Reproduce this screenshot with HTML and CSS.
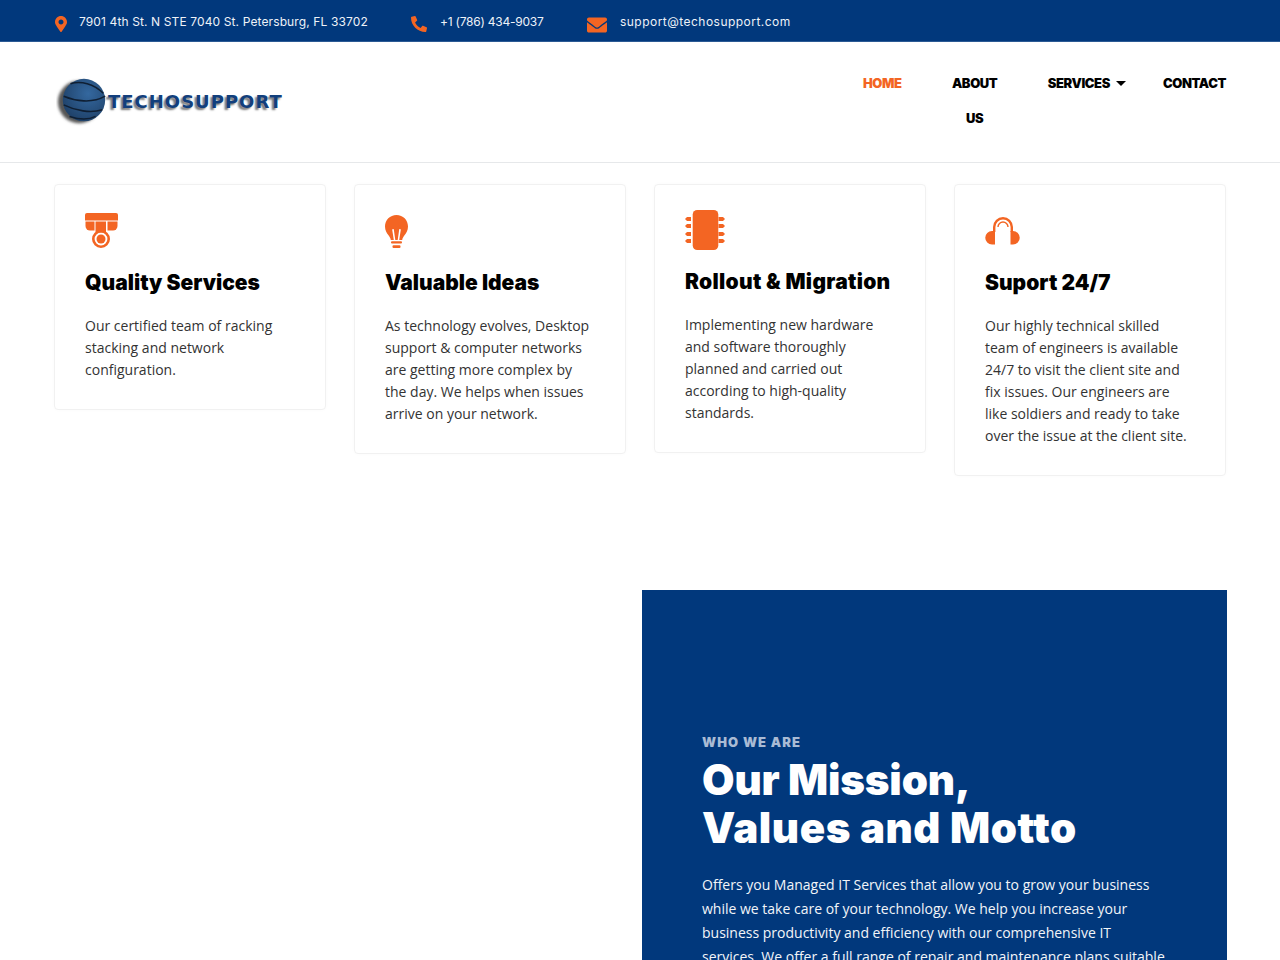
FILE: index.html
```html
<!DOCTYPE html>
<html lang="en">
<head>
<meta charset="utf-8">
<title>Techosupport</title>
<link rel="stylesheet" href="styles.css">
</head>
<body>
<div class="topbar">
  <div class="topbar-item item-address">
    <svg class="icon-pin" viewBox="0 0 384 512"><path d="M172.268 501.67C26.97 291.031 0 256.405 0 192 0 85.961 85.961 0 192 0s192 85.961 192 192c0 64.405-26.97 99.031-172.268 309.67-9.535 13.774-29.93 13.773-39.464 0zM192 272c44.183 0 80-35.817 80-80s-35.817-80-80-80-80 35.817-80 80 35.817 80 80 80z"/></svg>
    <span>7901 4th St. N STE 7040 St. Petersburg, FL 33702</span>
  </div>
  <div class="topbar-item item-phone">
    <svg class="icon-phone" viewBox="0 0 512 512"><path transform="matrix(-1 0 0 1 512 0)" d="M493.4 24.6l-104-24c-11.3-2.6-22.9 3.3-27.5 13.9l-48 112c-4.2 9.8-1.4 21.3 6.9 28l60.6 49.6c-36 76.7-98.9 140.5-177.2 177.2l-49.6-60.6c-6.8-8.3-18.2-11.1-28-6.9l-112 48C3.9 366.5-2 378.1.6 389.4l24 104C27.1 504.2 36.7 512 48 512c256.1 0 464-207.5 464-464 0-11.2-7.7-20.9-18.6-23.4z"/></svg>
    <span>+1 (786) 434-9037</span>
  </div>
  <div class="topbar-item item-mail">
    <svg class="icon-mail" viewBox="0 64 512 384"><path d="M502.3 190.8c3.9-3.1 9.7-.2 9.7 4.7V400c0 26.5-21.5 48-48 48H48c-26.5 0-48-21.5-48-48V195.6c0-5 5.7-7.8 9.7-4.7 22.4 17.4 52.1 39.5 154.1 113.6 21.1 15.4 56.7 47.8 92.2 47.6 35.7.3 72-32.8 92.3-47.6 102-74.1 131.6-96.3 154-113.7zM256 320c23.2.4 56.6-29.2 73.4-41.4 132.7-96.3 142.8-104.7 173.4-128.7 5.8-4.5 9.2-11.5 9.2-18.9v-19c0-26.5-21.5-48-48-48H48C21.5 64 0 85.5 0 112v19c0 7.4 3.4 14.3 9.2 18.9 30.6 23.9 40.7 32.4 173.4 128.7 16.8 12.2 50.2 41.8 73.4 41.4z"/></svg>
    <span>support@techosupport.com</span>
  </div>
</div>

<header class="site-header">
  <a class="logo" href="#">
    <svg class="logo-globe" viewBox="0 0 56 56">
      <defs>
        <radialGradient id="globe" cx="0.6" cy="0.35" r="0.8">
          <stop offset="0" stop-color="#34689f"/>
          <stop offset="1" stop-color="#1b3a5f"/>
        </radialGradient>
        <filter id="soft" x="-20%" y="-20%" width="140%" height="140%"><feGaussianBlur stdDeviation="1.8"/></filter>
      </defs>
      <circle cx="24" cy="29" r="22" fill="#555" filter="url(#soft)"/>
      <circle cx="29" cy="27" r="22" fill="url(#globe)"/>
      <path d="M15 10c11-3 24 0 34 10M8 23c12 5 29 8 43 0M8 32c12 6 28 9 40 5M14 44c9 3 19 4 27 0" fill="none" stroke="#0f1f33" stroke-width="1.6"/>
    </svg>
    <span class="logo-text">TECHOSUPPORT</span>
  </a>
  <nav class="main-nav">
    <a class="nav-link nav-active" href="#">HOME</a>
    <a class="nav-link nav-about" href="#">ABOUT US</a>
    <a class="nav-link nav-services" href="#">SERVICES</a>
    <a class="nav-link" href="#">CONTACT</a>
  </nav>
</header>

<section class="cards">
  <article class="card">
    <div class="card-icon">
      <svg class="icon-medal" viewBox="0 0 33 35">
        <path d="M2 0h29a2 2 0 0 1 2 2v5.500H0V2a2 2 0 0 1 2-2z"/>
        <path d="M0.500 8.500h9V17.500H5A4.500 4.500 0 0 1 .5 13z"/>
        <path d="M10.500 8.500h10.500V19.500H10.500z"/>
        <path d="M22.500 8.500H32.500V13a4.500 4.500 0 0 1-4.500 4.500h-5.500z"/>
        <circle cx="16" cy="26" r="7.700" fill="none" stroke="#f36523" stroke-width="2.600"/>
        <circle cx="16" cy="26" r="4.500"/>
      </svg>
    </div>
    <h3>Quality Services</h3>
    <p>Our certified team of racking stacking and network configuration.</p>
  </article>
  <article class="card">
    <div class="card-icon">
      <svg class="icon-bulb" viewBox="0 0 23 33">
        <path d="M11.500 0C5 0 0 5 0 11.500c0 4 1.800 6.500 3.300 8.500 1.300 1.700 2.200 3 2.500 5h3L7.200 14.800c0-.8 1.300-1 1.600-.2l1.500 10.400h2.400l1.500-10.400c.3-.8 1.600-.6 1.600.2L14.200 25h3c.3-2 1.200-3.300 2.500-5C21.200 18 23 15.500 23 11.500 23 5 18 0 11.500 0z"/>
        <rect x="6" y="26.300" width="11" height="2.200" rx="1"/>
        <rect x="7.500" y="30.300" width="8" height="2.700" rx="1"/>
      </svg>
    </div>
    <h3>Valuable Ideas</h3>
    <p>As technology evolves, Desktop support &amp; computer networks are getting more complex by the day. We helps when issues arrive on your network.</p>
  </article>
  <article class="card card-tight">
    <div class="card-icon">
      <svg class="icon-chip" viewBox="0 0 40 40">
        <rect x="7.700" y="0" width="25.600" height="40" rx="4.500"/>
        <path d="M0 9l2-2h4v4H2zM0 16l2-2h4v4H2zM0 24l2-2h4v4H2zM0 31l2-2h4v4H2z"/>
        <path d="M40 9l-2-2h-4.500v4H38zM40 16l-2-2h-4.500v4H38zM40 24l-2-2h-4.500v4H38zM40 31l-2-2h-4.500v4H38z"/>
      </svg>
    </div>
    <h3>Rollout &amp; Migration</h3>
    <p>Implementing new hardware and software thoroughly planned and carried out according to high-quality standards.</p>
  </article>
  <article class="card">
    <div class="card-icon">
      <svg class="icon-phones" viewBox="0 0 35 28">
        <path d="M10 14v13.500H7A6.750 6.750 0 0 1 7 14z"/>
        <path d="M25.500 14v13.500H28A6.750 6.750 0 0 0 28 14z"/>
        <path d="M9.200 15V10a8.800 8.800 0 0 1 17.600 0V15" fill="none" stroke="#f36523" stroke-width="2.400"/>
        <path d="M13 10a5 5 0 0 1 10 0" fill="none" stroke="#f36523" stroke-width="1.400"/>
      </svg>
    </div>
    <h3>Suport 24/7</h3>
    <p>Our highly technical skilled team of engineers is available 24/7 to visit the client site and fix issues. Our engineers are like soldiers and ready to take over the issue at the client site.</p>
  </article>
</section>

<section class="mission">
  <div class="mission-panel">
    <div class="eyebrow">WHO WE ARE</div>
    <h2><span class="line-first">Our Mission,</span><span class="line-second">Values and Motto</span></h2>
    <p>Offers you Managed IT Services that allow you to grow your business while we take care of your technology. We help you increase your business productivity and efficiency with our comprehensive IT services. We offer a full range of repair and maintenance plans suitable</p>
  </div>
</section>
</body>
</html>
```

FILE: styles.css
```css
* { box-sizing: border-box; }
html, body { margin: 0; padding: 0; }
body {
  width: 1280px;
  height: 960px;
  overflow: hidden;
  background: #fff;
  font-family: "Open Sans", "Liberation Sans", sans-serif;
  font-size: 14px;
  color: #333;
}
a { text-decoration: none; color: inherit; }

/* top bar */
.topbar {
  display: flex;
  align-items: center;
  height: 42px;
  padding: 2px 0 0 55px;
  background: #01387c;
  border-bottom: 1px solid #2b5a94;
  color: #eef2f8;
  font-family: Inter, "Liberation Sans", sans-serif;
  font-size: 12px;
}
.topbar-item { display: flex; align-items: center; gap: 13px; }
.topbar svg { fill: #f36523; display: block; }
.item-address { width: 356px; gap: 12px; letter-spacing: 0.12px; }
.item-phone { width: 176px; letter-spacing: -0.23px; }
.item-mail { letter-spacing: 0.47px; }
.icon-pin { width: 12px; height: 16px; margin-top: 5px; }
.icon-phone { width: 16px; height: 16px; margin-top: 4px; }
.icon-mail { width: 20px; height: 16px; margin-top: 6px; }

/* header */
.site-header {
  display: flex;
  justify-content: space-between;
  height: 121px;
  padding: 0 54px 0 56px;
  border-bottom: 1px solid #e6e8ea;
}
.logo {
  display: flex;
  align-items: center;
  height: 118px;
}
.logo-globe { width: 54px; height: 54px; flex: none; filter: blur(0.5px); }
.logo-text {
  margin: 1px 0 0 -2px;
  font-family: "DejaVu Sans", sans-serif;
  font-size: 18px;
  font-weight: 700;
  letter-spacing: 1px;
  color: #123f7c;
  text-shadow: -2px 2px 2px #777;
}
.main-nav {
  display: flex;
  gap: 50px;
  align-items: flex-start;
  padding-top: 24px;
  font-family: Inter, "Liberation Sans", sans-serif;
  font-size: 13px;
  font-weight: 900;
  letter-spacing: -0.4px;
  line-height: 35px;
  color: #000;
}
.nav-link { position: relative; display: block; }
.nav-active { color: #f36523; }
.nav-about { width: 46px; text-align: center; }
.nav-services { margin-right: 3px; }
.nav-services::after {
  content: "";
  position: absolute;
  left: 68px;
  top: 15px;
  border: 5px solid transparent;
  border-top: 5px solid #000;
  border-bottom: 0;
}

/* cards */
.cards {
  display: grid;
  grid-template-columns: repeat(4, 272px);
  gap: 28px;
  align-items: start;
  padding: 21px 0 0 54px;
}
.card {
  padding: 27px 30px 28px;
  border: 1px solid #f1f1f1;
  border-radius: 4px;
  box-shadow: 0 0 4px rgba(0, 0, 0, 0.02);
}
.card-icon { display: flex; align-items: flex-end; height: 36px; }
.card-icon svg { display: block; fill: #f36523; }
.icon-medal { width: 33px; height: 35px; }
.icon-bulb { width: 23px; height: 33px; }
.icon-chip { width: 40px; height: 40px; margin-bottom: -2px; }
.icon-phones { width: 35px; height: 28px; margin-bottom: 3px; }
.card h3 {
  margin: 20px 0 0;
  font-family: Inter, "Liberation Sans", sans-serif;
  font-size: 21px;
  font-weight: 900;
  line-height: 30px;
  color: #000;
}
.card-tight h3 { margin-top: 19px; letter-spacing: 0.3px; }
.card p { margin: 17px 0 0; line-height: 22px; color: #333; }

/* mission */
.mission {
  display: flex;
  justify-content: flex-end;
  padding: 114px 53px 0 0;
}
.mission-panel {
  width: 585px;
  height: 500px;
  padding: 143px 60px 0;
  background: #01387c;
  color: #fff;
}
.eyebrow {
  font-family: Inter, "Liberation Sans", sans-serif;
  font-size: 13px;
  font-weight: 900;
  line-height: 18px;
  letter-spacing: 1.100px;
  color: #a9bbd4;
}
.mission-panel h2 {
  margin: 5px 0 0;
  font-family: Inter, "Liberation Sans", sans-serif;
  font-size: 42px;
  font-weight: 900;
  line-height: 48px;
}
.line-first { display: block; letter-spacing: -0.13px; }
.line-second { display: block; letter-spacing: 0.57px; }
.mission-panel p {
  margin: 21px 0 0;
  line-height: 24px;
  color: #f2f5f9;
}
```
